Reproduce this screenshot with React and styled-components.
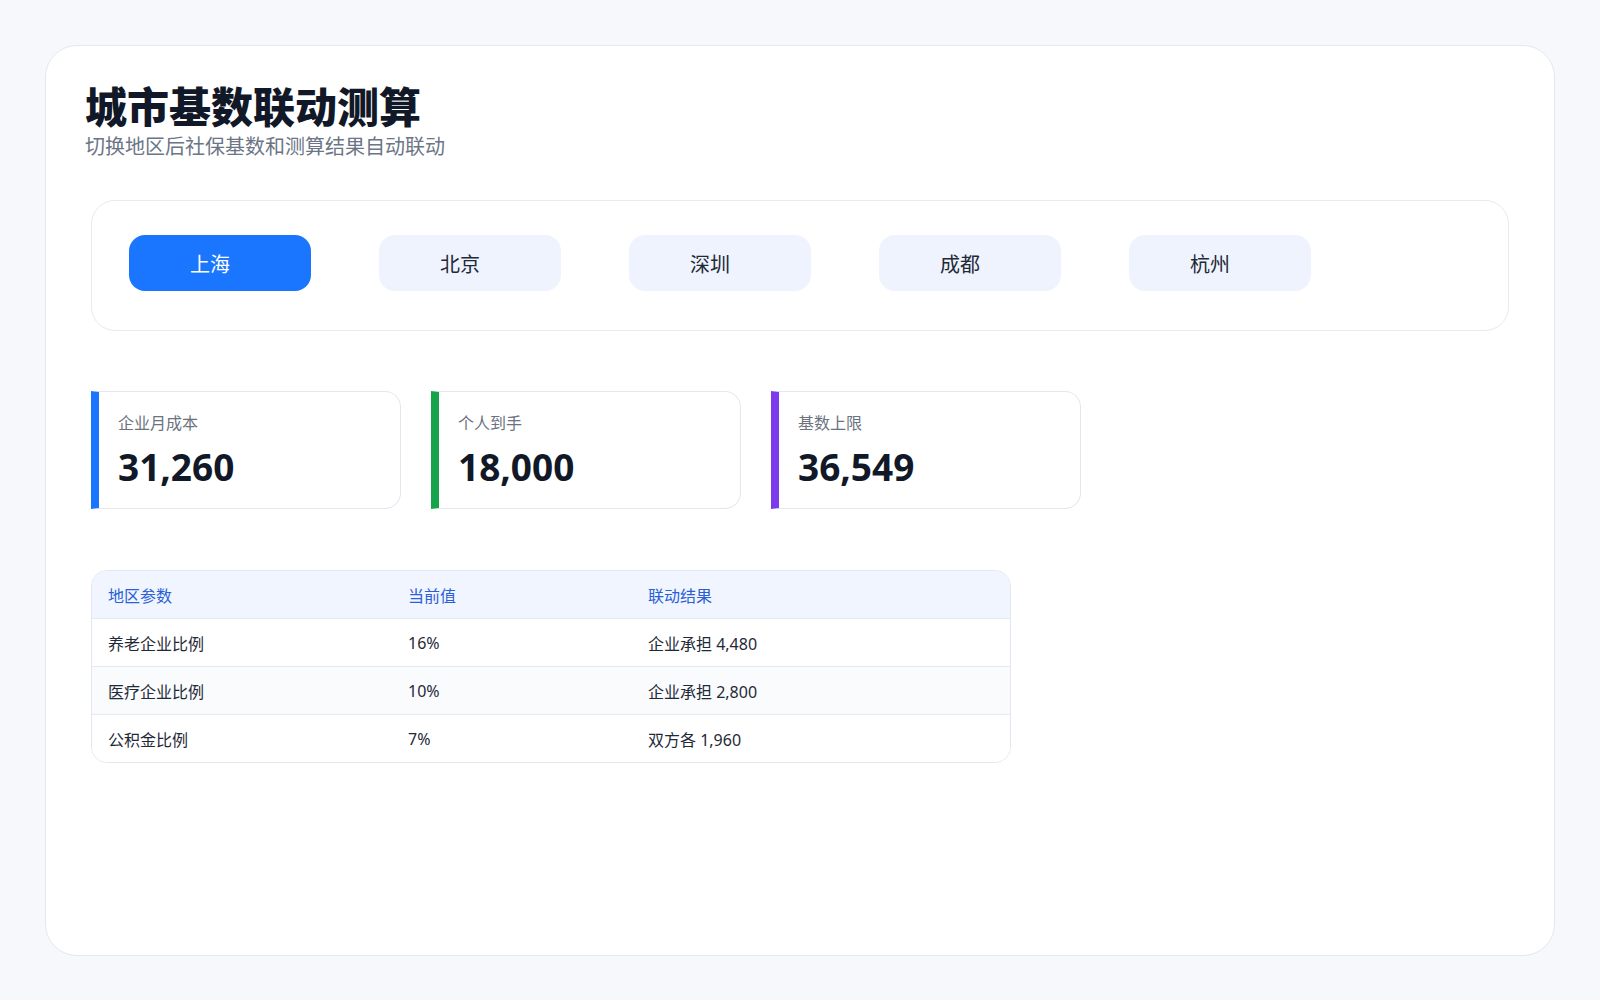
import React, { useState } from 'react'
import styled, { createGlobalStyle } from 'styled-components'

const GlobalStyle = createGlobalStyle`
  * { box-sizing: border-box; }
  body {
    margin: 0;
    background: #f6f8fc;
    font-family: "Noto Sans", "Noto Sans CJK SC", sans-serif;
    color: #111827;
  }
`

const cities = {
  上海: { cost: '31,260', net: '18,000', cap: '36,549', pension: '16%', pensionCost: '4,480', medical: '10%', medicalCost: '2,800', fund: '7%', fundCost: '1,960' },
  北京: { cost: '30,840', net: '17,600', cap: '35,283', pension: '16%', pensionCost: '4,400', medical: '9.8%', medicalCost: '2,695', fund: '12%', fundCost: '3,300' },
  深圳: { cost: '29,900', net: '18,400', cap: '27,501', pension: '15%', pensionCost: '4,125', medical: '5.2%', medicalCost: '1,430', fund: '5%', fundCost: '1,375' },
  成都: { cost: '27,300', net: '18,900', cap: '23,535', pension: '16%', pensionCost: '3,766', medical: '6.5%', medicalCost: '1,530', fund: '6%', fundCost: '1,412' },
  杭州: { cost: '29,100', net: '18,200', cap: '24,930', pension: '14%', pensionCost: '3,490', medical: '9.5%', medicalCost: '2,368', fund: '12%', fundCost: '2,992' },
}

const App = () => {
  const [city, setCity] = useState('上海')
  const data = cities[city]

  const stats = [
    { label: '企业月成本', value: data.cost, color: '#1b76ff' },
    { label: '个人到手', value: data.net, color: '#16a34a' },
    { label: '基数上限', value: data.cap, color: '#7c3aed' },
  ]

  const rows = [
    ['养老企业比例', data.pension, `企业承担 ${data.pensionCost}`],
    ['医疗企业比例', data.medical, `企业承担 ${data.medicalCost}`],
    ['公积金比例', data.fund, `双方各 ${data.fundCost}`],
  ]

  return (
    <Page>
      <GlobalStyle />
      <Card>
        <Title>城市基数联动测算</Title>
        <Subtitle>切换地区后社保基数和测算结果自动联动</Subtitle>

        <Content>
          <TabPanel>
            {Object.keys(cities).map(name => (
              <Tab key={name} $active={name === city} onClick={() => setCity(name)}>
                {name}
              </Tab>
            ))}
          </TabPanel>

          <Stats>
            {stats.map(stat => (
              <StatCard key={stat.label} $color={stat.color}>
                <StatLabel>{stat.label}</StatLabel>
                <StatValue>{stat.value}</StatValue>
              </StatCard>
            ))}
          </Stats>

          <Table>
            <HeadRow>
              <HeadCell>地区参数</HeadCell>
              <HeadCell>当前值</HeadCell>
              <HeadCell>联动结果</HeadCell>
            </HeadRow>
            {rows.map((row, i) => (
              <Row key={row[0]} $striped={i % 2 === 1}>
                {row.map(cell => <Cell key={cell}>{cell}</Cell>)}
              </Row>
            ))}
          </Table>
        </Content>
      </Card>
    </Page>
  )
}

const Page = styled.div`
  min-height: 100vh;
  padding: 45px;
`

const Card = styled.div`
  min-height: 911px;
  background: #ffffff;
  border: 1px solid #e3e8f0;
  border-radius: 32px;
  padding: 38px 39px 40px;
`

const Title = styled.h1`
  margin: 0;
  font-size: 42px;
  line-height: 46px;
  font-weight: 800;
  color: #111827;
`

const Subtitle = styled.p`
  margin: 3px 0 0;
  font-size: 20px;
  line-height: 28px;
  color: #6b7585;
`

const Content = styled.div`
  padding: 0 6px;
  margin-top: 39px;
`

const TabPanel = styled.div`
  display: flex;
  gap: 68px;
  border: 1px solid #e6eaf1;
  border-radius: 24px;
  padding: 34px 37px 39px;
`

const Tab = styled.button`
  width: 182px;
  height: 56px;
  padding: 0 20px 0 0;
  border: none;
  border-radius: 16px;
  font-family: "Noto Sans", "Noto Sans CJK SC", sans-serif;
  font-size: 20px;
  cursor: pointer;
  background: ${p => (p.$active ? '#1b76ff' : '#eef3fd')};
  color: ${p => (p.$active ? '#ffffff' : '#1f2937')};
`

const Stats = styled.div`
  display: flex;
  gap: 30px;
  margin-top: 60px;
`

const StatCard = styled.div`
  width: 310px;
  height: 118px;
  border: 1px solid #e3e8f0;
  border-left: 8px solid ${p => p.$color};
  border-radius: 0 16px 16px 0;
  padding: 19px 19px 0;
`

const StatLabel = styled.div`
  font-size: 16px;
  line-height: 24px;
  color: #6b7280;
`

const StatValue = styled.div`
  margin-top: 10px;
  font-size: 37px;
  line-height: 44px;
  font-weight: 700;
  color: #111827;
`

const Table = styled.div`
  width: 920px;
  margin-top: 61px;
  border: 1px solid #e3e8f0;
  border-radius: 16px;
  overflow: hidden;
`

const HeadRow = styled.div`
  display: grid;
  grid-template-columns: 300px 240px 1fr;
  height: 47px;
  align-items: center;
  background: #f0f5ff;
`

const HeadCell = styled.div`
  padding-left: 16px;
  font-size: 16px;
  color: #2a5fd6;
`

const Row = styled.div`
  display: grid;
  grid-template-columns: 300px 240px 1fr;
  height: 48px;
  align-items: center;
  border-top: 1px solid #e6eaf0;
  background: ${p => (p.$striped ? '#f9fbfd' : '#ffffff')};
`

const Cell = styled.div`
  padding-left: 16px;
  font-size: 16px;
  color: #1f2937;
`

export default App
